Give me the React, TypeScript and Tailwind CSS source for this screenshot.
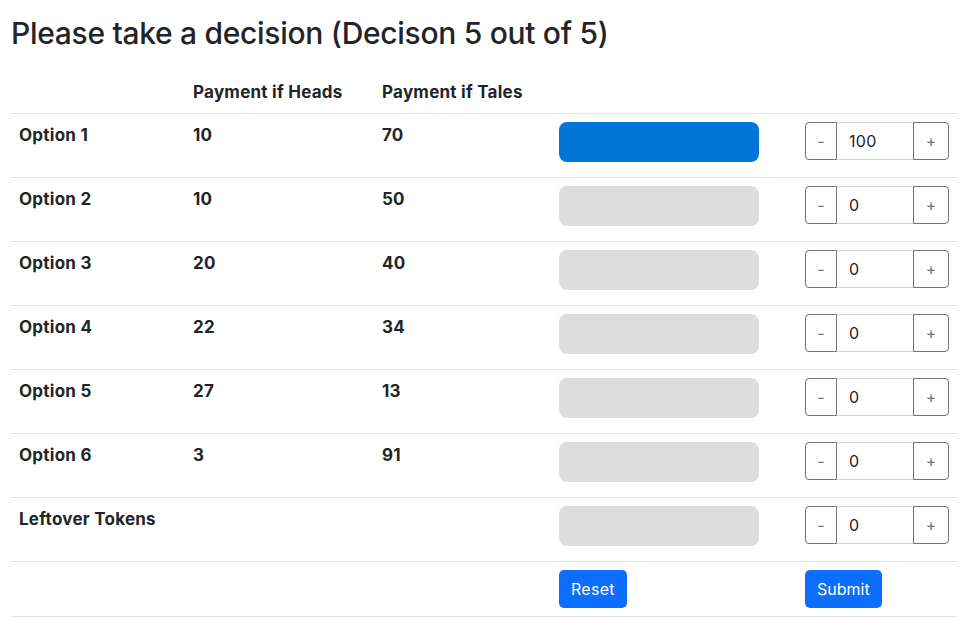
import React from 'react';

const options = [
  { label: 'Option 1', heads: '10', tails: '70', tokens: 100 },
  { label: 'Option 2', heads: '10', tails: '50', tokens: 0 },
  { label: 'Option 3', heads: '20', tails: '40', tokens: 0 },
  { label: 'Option 4', heads: '22', tails: '34', tokens: 0 },
  { label: 'Option 5', heads: '27', tails: '13', tokens: 0 },
  { label: 'Option 6', heads: '3', tails: '91', tokens: 0 },
  { label: 'Leftover Tokens', heads: '', tails: '', tokens: 0 },
];

const cols = 'grid grid-cols-[174px_189px_177px_246px_160px]';

const Stepper = ({ value }: { value: number }) => (
  <div className="flex h-[38px] w-[144px]">
    <button className="w-[32px] border border-[#6c757d] rounded-l-[4px] text-[#6c757d] text-[16px] leading-none">-</button>
    <input
      readOnly
      value={value}
      className="w-[76px] border-y border-[#ced4da] px-[12px] text-[16px] tracking-[0.3px] text-[#212529] outline-none"
    />
    <button className="w-[36px] border border-[#6c757d] rounded-r-[4px] text-[#6c757d] text-[16px] leading-none">+</button>
  </div>
);

const App = () => {
  return (
    <div className="min-h-screen bg-white px-[11px] pt-[15px] text-[#212529] font-['Inter','Liberation_Sans',sans-serif]">
      <h2 className="text-[30px] leading-[36px] font-medium mb-[21px] tracking-[-0.3px]">
        Please take a decision (Decison 5 out of 5)
      </h2>

      <div className="w-[946px] text-[16px] leading-[24px]">
        <div className={`${cols} h-[41px] font-bold text-[17px] tracking-[0.25px]`}>
          <div className="p-[8px]"></div>
          <div className="p-[8px]">Payment if Heads</div>
          <div className="p-[8px]">Payment if Tales</div>
          <div className="p-[8px]"></div>
          <div className="p-[8px]"></div>
        </div>

        {options.map((opt) => (
          <div key={opt.label} className={`${cols} h-[64px] border-t border-[#dee2e6]`}>
            <div className="px-[8px] pt-[9px] font-bold text-[17px] tracking-[0.25px]">{opt.label}</div>
            <div className="px-[8px] pt-[9px] font-bold text-[17px] tracking-[0.25px]">{opt.heads}</div>
            <div className="px-[8px] pt-[9px] font-bold text-[17px] tracking-[0.25px]">{opt.tails}</div>
            <div className="p-[8px]">
              <div
                className={`w-[200px] h-[40px] rounded-[8px] ${opt.tokens > 0 ? 'bg-[#0275d8]' : 'bg-[#dddddd]'}`}
              />
            </div>
            <div className="p-[8px]">
              <Stepper value={opt.tokens} />
            </div>
          </div>
        ))}

        <div className={`${cols} h-[56px] border-y border-[#dee2e6]`}>
          <div className="p-[8px]"></div>
          <div className="p-[8px]"></div>
          <div className="p-[8px]"></div>
          <div className="p-[8px]">
            <button className="h-[38px] px-[12px] bg-[#0d6efd] text-white rounded-[5px] tracking-[0.3px]">Reset</button>
          </div>
          <div className="p-[8px]">
            <button className="h-[38px] px-[12px] bg-[#0d6efd] text-white rounded-[5px]">Submit</button>
          </div>
        </div>
      </div>
    </div>
  );
};

export default App;
